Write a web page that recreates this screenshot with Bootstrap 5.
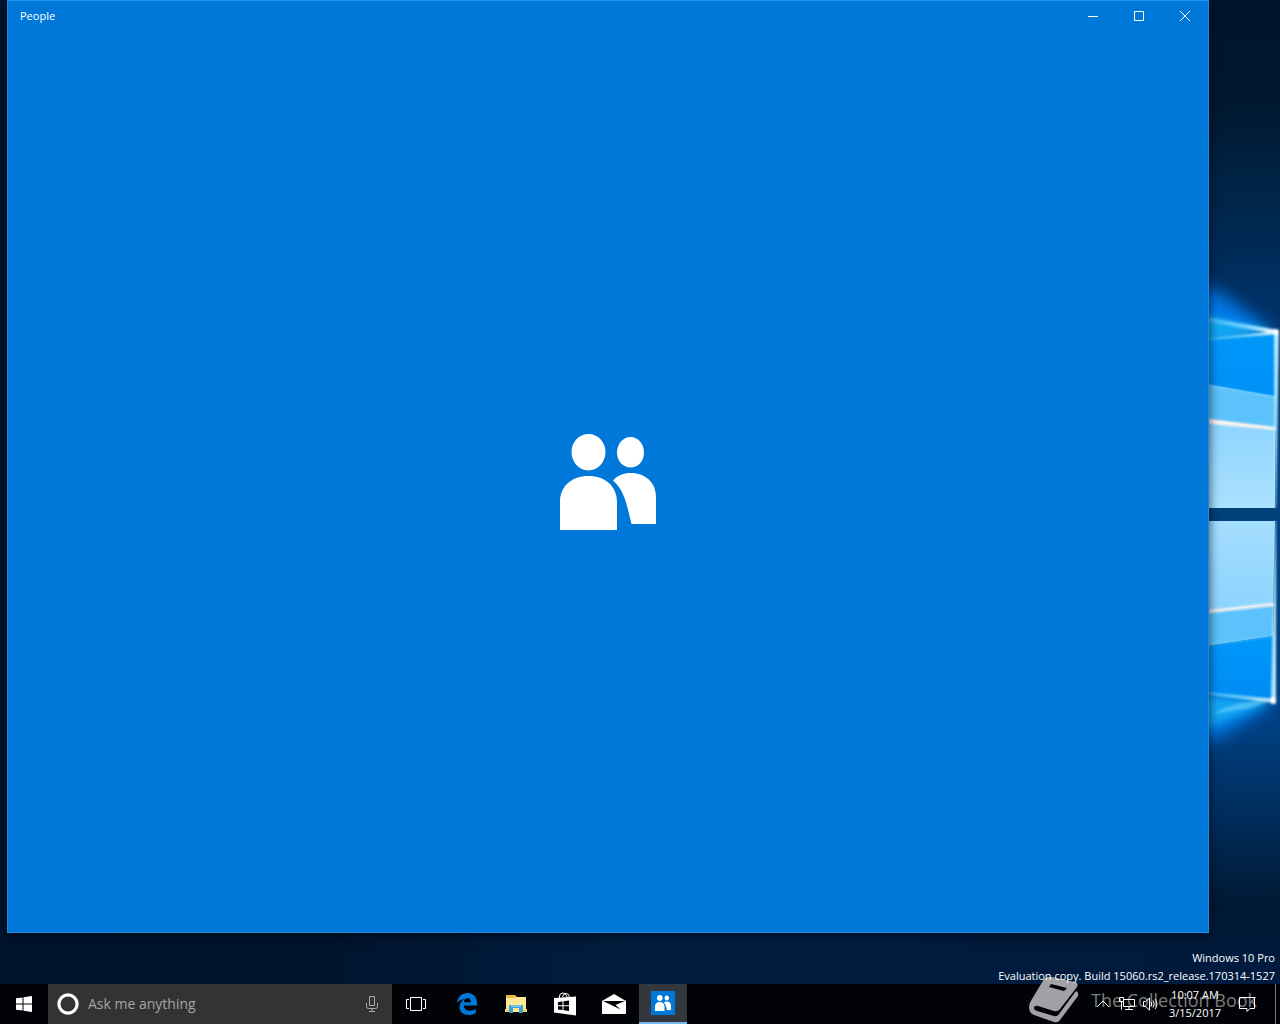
<!DOCTYPE html>
<html lang="en">
<head>
<meta charset="utf-8">
<meta name="viewport" content="width=device-width, initial-scale=1">
<title>People</title>
<link href="https://cdn.jsdelivr.net/npm/bootstrap@5.3.0/dist/css/bootstrap.min.css" rel="stylesheet">
<style>
body{font-family:"Open Sans","Noto Sans",sans-serif;font-size:11px;line-height:18px;background:#00132c;color:#fff}
button{border:0;background:transparent;color:inherit;padding:0}
svg{display:block;flex:none}
.desktop{background:linear-gradient(90deg,#001430,#00142e 25%,#001d40 50%,#001b3e 80%,#001a38)}
.wallpaper{right:0;top:0;width:80px;height:100%}
.app-window{margin:0 71px 0 7px;background:#0078d9;border:1px solid #2a87d4;border-top-color:#2490e8;box-shadow:0 2px 10px rgba(0,5,15,.7)}
.title-bar{height:30px;padding-left:12px}
.caption-btn{width:46px;height:30px}
.build-info{height:51px;padding:16px 5px 0 0}
.taskbar{height:40px;background:#020307}
.slot{width:48px;height:40px}
.search-box{width:344px;background:#333;padding:0 12px 0 8px}
.search-box input{font-size:14px;line-height:24px;color:#aaa;padding:0 0 0 8px;min-width:0}
.search-box input::placeholder{color:#a6a6a6;opacity:1}
.apps{gap:1px;margin-left:3px}
.active-app{background:#33383e;border-bottom:2px solid #76b9ed}
.tray-btn{width:24px;height:40px}
.clock{width:64px}
.notice{width:40px;height:40px;margin-right:8px}
.show-desktop{width:5px;border-left:1px solid #777}
.collection{right:23px;bottom:0;height:48px;gap:12px;color:#7c7c7c;font-size:18px;line-height:22px;pointer-events:none}
</style>
<script src="https://cdn.jsdelivr.net/npm/bootstrap@5.3.0/dist/js/bootstrap.bundle.min.js"></script>
</head>
<body>
<svg width="0" height="0" class="position-absolute" aria-hidden="true">
<symbol id="people" viewBox="0 0 96 96"><path fill="#fff" d="M28.500 0C38 0 45.500 8 45.500 18S38 36.500 28.500 36.500 11.500 28 11.500 18 19 0 28.500 0ZM0 96V68C0 52 12 42 28.500 42S57 52 57 68V96ZM70.500 3C78 3 84 9.500 84 18.500S78 33.500 70.500 33.500 57 27 57 18.500 63 3 70.500 3ZM53 46.500C58 41 64 39 70.500 39C86 39 96 49 96 63V90H71.500C67 72 65 57 53 46.500Z"/></symbol>
</svg>
<div class="vh-100 d-flex flex-column overflow-hidden position-relative">
  <main class="desktop flex-grow-1 d-flex flex-column position-relative">
    <svg class="wallpaper position-absolute" viewBox="1200 0 80 984" preserveAspectRatio="none" aria-hidden="true">
      <defs>
        <linearGradient id="sky" x2="0" y2="1"><stop stop-color="#00142d"/><stop offset=".1" stop-color="#00182f"/><stop offset=".2" stop-color="#002549"/><stop offset=".3" stop-color="#003064"/><stop offset=".5" stop-color="#004383"/><stop offset=".74" stop-color="#003f80"/><stop offset=".83" stop-color="#002d5c"/><stop offset=".92" stop-color="#001934"/><stop offset="1" stop-color="#001b40"/></linearGradient>
        <linearGradient id="pane" x2="0" y2="1"><stop stop-color="#8dd4fe"/><stop offset="1" stop-color="#aae1ff"/></linearGradient>
        <linearGradient id="paneLow" x2="0" y2="1"><stop stop-color="#a4deff"/><stop offset="1" stop-color="#8dd4fe"/></linearGradient>
        <linearGradient id="deep" x2="0" y2="1"><stop stop-color="#0098fa"/><stop offset="1" stop-color="#008cf4"/></linearGradient>
        <linearGradient id="beam" x2="1"><stop stop-color="#26b0fa"/><stop offset=".6" stop-color="#74d4ff"/><stop offset="1" stop-color="#fff"/></linearGradient>
        <filter id="soft" x="-50%" y="-50%" width="200%" height="200%"><feGaussianBlur stdDeviation="8"/></filter>
        <filter id="mid" filterUnits="userSpaceOnUse" x="1180" y="280" width="110" height="480"><feGaussianBlur stdDeviation="4"/></filter>
        <filter id="fine" filterUnits="userSpaceOnUse" x="1190" y="280" width="100" height="460"><feGaussianBlur stdDeviation="1"/></filter>
      </defs>
      <path fill="url(#sky)" d="M1200 0h80v984h-80z"/>
      <path fill="#0078e8" filter="url(#soft)" d="M1180 274L1222 294L1274 331L1200 350ZM1180 680L1274 704L1225 734L1180 752Z"/>
      <path fill="#18b0f8" filter="url(#mid)" opacity=".85" d="M1190 312L1274 331L1200 345ZM1190 694L1274 702L1210 726L1190 730Z"/>
      <path fill="url(#deep)" d="M1200 340L1276 333V430H1200Z"/>
      <path fill="#5cc2fc" d="M1200 383L1275 396V430L1200 418Z"/>
      <path fill="url(#pane)" d="M1200 418L1275 428V508H1200Z"/>
      <path fill="#004078" d="M1200 509h80v11h-80z"/>
      <path fill="url(#paneLow)" d="M1200 521H1275L1273 605L1200 613Z"/>
      <path fill="#5cc2fc" d="M1200 613L1273 605V636L1200 647Z"/>
      <path fill="url(#deep)" d="M1200 647L1273 636L1272 699L1200 692Z"/>
      <g filter="url(#fine)">
        <path fill="url(#beam)" d="M1200 316L1278 330V334L1235 327L1200 320ZM1200 339L1278 331V334L1200 341ZM1200 691L1276 699V703L1200 694Z"/>
        <path fill="#69cff8" opacity=".6" d="M1214 714C1228 704 1250 700 1275 700L1250 708Z"/>
        <path fill="#fff4ee" d="M1200 418L1275 427V430L1200 423ZM1200 611L1273 603V606L1200 614Z"/>
        <path stroke="#78d0ff" d="M1200 384L1275 397M1200 646L1273 636"/>
        <path fill="#b4eaff" d="M1274 333L1279 330L1276 508H1275ZM1275 521H1276L1276 704H1271Z"/>
        <circle cx="1276" cy="332" r="3" fill="#fff"/><circle cx="1273" cy="700" r="3" fill="#fff"/>
      </g>
    </svg>
    <section class="app-window flex-grow-1 d-flex flex-column position-relative" aria-label="People">
      <header class="title-bar d-flex align-items-center">
        <span class="me-auto">People</span>
        <button class="caption-btn d-flex align-items-center justify-content-center" aria-label="Minimize"><svg width="10" height="10" stroke="#fff"><path d="M0 5.500H10"/></svg></button>
        <button class="caption-btn d-flex align-items-center justify-content-center" aria-label="Maximize"><svg width="10" height="10" stroke="#fff" fill="none"><path d="M.5.5h9v9h-9z"/></svg></button>
        <button class="caption-btn d-flex align-items-center justify-content-center" aria-label="Close"><svg width="10" height="10" stroke="#fff"><path d="M0 0L10 10M10 0L0 10"/></svg></button>
      </header>
      <div class="flex-grow-1 d-flex align-items-center justify-content-center"><svg width="96" height="96"><use href="#people"/></svg></div>
    </section>
    <div class="build-info text-end position-relative z-1"><div>Windows 10 Pro</div><div>Evaluation copy. Build 15060.rs2_release.170314-1527</div></div>
  </main>
  <footer class="taskbar d-flex">
    <button class="slot d-flex align-items-center justify-content-center" aria-label="Start"><svg width="16" height="16" fill="#fff"><path d="M0 2.300L6.500 1.400V7.500H0ZM7.500 1.200L16 0V7.500H7.500ZM0 8.500H6.500V14.600L0 13.700ZM7.500 8.500H16V16L7.500 14.800Z"/></svg></button>
    <div class="search-box d-flex align-items-center">
      <svg width="24" height="24" fill="none"><circle cx="12" cy="12" r="10.500" stroke="#888"/><circle cx="12" cy="12" r="9" stroke="#fff" stroke-width="3"/></svg>
      <input class="flex-grow-1 border-0 bg-transparent" type="text" placeholder="Ask me anything" aria-label="Ask me anything">
      <button aria-label="Speak"><svg width="16" height="18" fill="none" stroke="#aaa"><path d="M5.500 1.500h5v9h-5zM2.500 8v3.500q0 2 2 2h7q2 0 2-2V8M8 13.500v3M5 16.500h6"/></svg></button>
    </div>
    <button class="slot d-flex align-items-center justify-content-center" aria-label="Task View"><svg width="20" height="16" fill="none" stroke="#fff"><path d="M4.500 1.500h11v13h-11zM3 3.500H.5v9H3M17 3.500h2.500v9H17"/></svg></button>
    <nav class="apps d-flex" aria-label="Pinned apps">
      <button class="slot d-flex align-items-center justify-content-center" aria-label="Edge"><svg width="20" height="22" viewBox="0 0 20 22"><path fill="#0078d7" d="M0 9.800C1 3.500 5 0 10.500 0C16.500 0 20 4.300 20 10V12.500H6.800C7 16 9.600 17.700 13 17.700C15.200 17.700 17 17.100 18.700 16V20.200C16.700 21.400 14.500 22 11.800 22C6 22 2.500 18.800 2.500 14C2.500 10.600 4.400 7.800 7.700 6.300C4.500 6.500 2 7.700 0 9.800ZM6.900 9.200H13.800C13.800 6.700 12.700 5.300 10.600 5.300C8.600 5.300 7.200 6.800 6.900 9.200Z"/></svg></button>
      <button class="slot d-flex align-items-center justify-content-center" aria-label="File Explorer"><svg width="22" height="20"><path fill="#e9bd45" d="M1 1H10L12 3H21V18H1Z"/><path fill="#ffe895" d="M1 4H9L11 3H21V18H1Z"/><path fill="#3ba0d4" d="M4 11H18V19H14V14H8V19H4Z"/><path fill="#75c5e8" d="M6 11H16V13H6Z"/><path fill="#f4d070" d="M0 15H4V18H0ZM18 15H22V18H18Z"/></svg></button>
      <button class="slot d-flex align-items-center justify-content-center" aria-label="Store"><svg width="22" height="24"><path fill="none" stroke="#fff" d="M5.500 7V4Q6 1 9 1T13 5M8.500 5Q9 1.500 12 1.500T15.500 5"/><path fill="#fff" d="M0 6L22 4.500V23.500L0 20.500Z"/><path fill="#020307" d="M4 10L8.500 9.500V13.300H4ZM9.500 9.300L15 8.600V13.300H9.500ZM4 14.300H8.500V18L4 17.500ZM9.500 14.300H15V19L9.500 18.200Z"/></svg></button>
      <button class="slot d-flex align-items-center justify-content-center" aria-label="Mail"><svg width="24" height="20"><path fill="#fff" d="M0 7L12 0L24 7V20H0Z"/><path fill="#020307" d="M1 7H23L13.500 11L18.500 15.500Z"/></svg></button>
      <button class="slot active-app d-flex align-items-center justify-content-center" aria-label="People"><svg width="24" height="24"><path fill="#0078d7" d="M0 0h24v24H0z"/><use href="#people" x="4" y="4" width="16" height="16"/></svg></button>
    </nav>
    <div class="ms-auto d-flex position-relative z-1">
      <button class="tray-btn d-flex align-items-center justify-content-center" aria-label="Show hidden icons"><svg width="14" height="8" fill="none" stroke="#fff"><path d="M1 7L7 1L13 7"/></svg></button>
      <button class="tray-btn d-flex align-items-center justify-content-center" aria-label="Network"><svg width="16" height="14" fill="none" stroke="#fff"><path d="M5 2.500H15.500V9.500H4.500V5M10 9.500V13M6 12.500H14M.5.5h4v4h-4zM2.500 4.500V12.500"/></svg></button>
      <button class="tray-btn d-flex align-items-center justify-content-center" aria-label="Volume"><svg width="18" height="14" fill="none" stroke="#fff"><path d="M1.500 4.500h2L7.500 1v12L3.500 9.500h-2zM9 5Q10.500 7 9 9M11 3.500Q13.500 7 11 10.500M13 2Q17 7 13 12"/></svg></button>
      <button class="clock text-center text-nowrap"><span class="d-block">10:07 AM</span><span class="d-block">3/15/2017</span></button>
      <button class="notice d-flex align-items-center justify-content-center" aria-label="Notifications"><svg width="16" height="16" fill="none" stroke="#fff"><path d="M.5 1.500h15v11h-4.500L8 15.500V12.500H.5Z"/></svg></button>
      <button class="show-desktop" aria-label="Show desktop"></button>
    </div>
  </footer>
  <div class="collection position-absolute d-flex align-items-center">
    <svg width="50" height="46" viewBox="0 0 50 46"><path fill="#a0a2a5" fill-rule="evenodd" d="M15 2Q18-1 23 0L46 5Q50 6 48 10L31 32Q29 35 25 34L9 29Q5 28 5 31Q5 33 8 34L25 39Q28 40 30 37L47 14Q50 15 49 19L31 43Q29 46 25 45L5 38Q0 36 0 30Q0 26 3 22ZM22 7L20 10L35 14L38 11Z"/></svg>
    <span>The Collection Book</span>
  </div>
</div>
</body>
</html>
